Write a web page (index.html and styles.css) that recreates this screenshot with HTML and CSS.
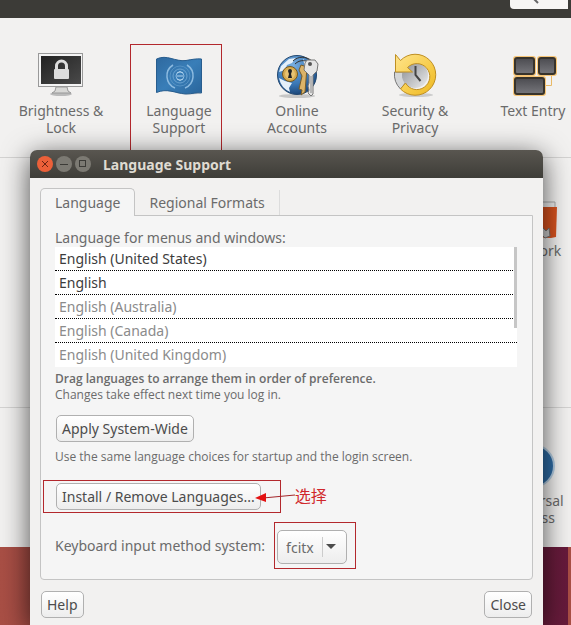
FILE: index.html
```
<!DOCTYPE html>
<html lang="en">
<head>
    <meta charset="UTF-8">
    <meta name="viewport" content="width=device-width, initial-scale=1.0">
    <title>Language Support</title>
    <link rel="stylesheet" href="styles.css">
</head>
<body>
    <div class="settings">
        <div class="topbar">
            <div class="search">
                <svg width="10" height="6" viewBox="0 0 10 6"><path d="M4 -1l4 4" fill="none" stroke="#666" stroke-width="2"/></svg>
            </div>
        </div>
        <div class="row first">
            <a class="item" href="#">
                <svg width="48" height="48" viewBox="0 0 48 48">
                    <defs>
                        <linearGradient id="screen" x1="0" y1="0" x2="1" y2="1">
                            <stop offset="0" stop-color="#222"/>
                            <stop offset="1" stop-color="#4a4a4a"/>
                        </linearGradient>
                    </defs>
                    <ellipse cx="24" cy="43" rx="11" ry="2" fill="#bbb"/>
                    <path d="M19 36h11l1 4 3 2H15l3-2z" fill="#d8d8d6" stroke="#999"/>
                    <rect x="1.500" y="2.500" width="44" height="33" fill="#f4f4f4" stroke="#999"/>
                    <rect x="4" y="5" width="40" height="28" fill="url(#screen)"/>
                    <path d="M19.500 19v-4a5 5 0 0 1 10 0v4" fill="none" stroke="#ddd" stroke-width="3"/>
                    <rect x="17" y="18" width="15" height="10" rx="1" fill="#dcdcdc"/>
                </svg>
                <span>Brightness &amp; Lock</span>
            </a>
            <a class="item marked" href="#">
                <svg width="48" height="48" viewBox="0 0 48 48">
                    <defs>
                        <linearGradient id="flag" x1="0" y1="0" x2="1" y2="1">
                            <stop offset="0" stop-color="#2f699f"/>
                            <stop offset=".5" stop-color="#397eb8"/>
                            <stop offset="1" stop-color="#2a659b"/>
                        </linearGradient>
                    </defs>
                    <ellipse cx="34" cy="42" rx="12" ry="1.500" fill="#c4c4c4"/>
                    <path d="M1.500 8C12 3 20 11 31 9.500c6-1 10-2 15.500-1.500v34c-5-1-9 1-16 1C20 42 12 37 1.500 41.500z" fill="url(#flag)" stroke="#285d8e"/>
                    <g fill="none" stroke="#8dbbe0">
                        <circle cx="25" cy="25" r="4"/>
                        <circle cx="25" cy="25" r="7" stroke="#6ba3d0"/>
                        <circle cx="25" cy="25" r="10" stroke="#5592c4"/>
                        <path d="M18 14a13 13 0 0 0 2 23M32 14a13 13 0 0 1-2 23" stroke-width="1.500"/>
                        <path d="M22 22q3-3 6 0M22 25h6M22 28q3 3 6 0" stroke="#b1d3ee"/>
                    </g>
                </svg>
                <span>Language Support</span>
            </a>
            <a class="item" href="#">
                <svg width="48" height="48" viewBox="0 0 48 48">
                    <defs>
                        <radialGradient id="globe" cx=".4" cy=".25" r=".8">
                            <stop offset="0" stop-color="#78aee0"/>
                            <stop offset=".6" stop-color="#3a77b5"/>
                            <stop offset="1" stop-color="#173f70"/>
                        </radialGradient>
                    </defs>
                    <ellipse cx="24" cy="45" rx="18" ry="2" fill="#c6c6c6"/>
                    <circle cx="24" cy="24" r="19.500" fill="url(#globe)" stroke="#24486f"/>
                    <path d="M8 15l8-7 7-1-4 5-5 2-2 5-6 2zM6 27l6 3 7 2-3 5 1 4q-9-4-11-14zM30 8l7 5 3 7-8-4z" fill="#e4f0fa"/>
                    <circle cx="17" cy="23" r="7.500" fill="#d6aa4e" stroke="#755820"/>
                    <circle cx="17" cy="23" r="5" fill="#e7c373"/>
                    <path d="M15 20a2 2 0 0 1 4 0l-1 3 1 4h-4l1-4z" fill="#222"/>
                    <path d="M20 10c5-5 13-5 19 0M22 13c5-5 12-4 16 0" fill="none" stroke="#333"/>
                    <path d="M28 14l6 2-2 25-4 3 1-5-3-1 3-13-3-6z" fill="#dbb368" stroke="#775c2a"/>
                    <path d="M34 9h8l3 4-1 7-4 4v19l-2 2-3-3 1-3-1-4 1-3v-8l-5-5 1-7z" fill="#e5e5e5" stroke="#777"/>
                    <circle cx="37" cy="13" r="2" fill="#555"/>
                    <path d="M38 25v17" stroke="#888"/>
                </svg>
                <span>Online Accounts</span>
            </a>
            <a class="item" href="#">
                <svg width="48" height="48" viewBox="0 0 48 48">
                    <defs>
                        <linearGradient id="gold" x1="0" y1="0" x2="1" y2="1">
                            <stop offset="0" stop-color="#ffe48b"/>
                            <stop offset=".6" stop-color="#f6cb48"/>
                            <stop offset="1" stop-color="#edb720"/>
                        </linearGradient>
                        <linearGradient id="face" x1="0" y1="0" x2="1" y2="1">
                            <stop offset="0" stop-color="#888b90"/>
                            <stop offset="1" stop-color="#eee"/>
                        </linearGradient>
                    </defs>
                    <ellipse cx="25" cy="44" rx="17" ry="2" fill="#ccc"/>
                    <path d="M3.500 21h9a13 13 0 0 0 2 11l-5 6q-7-7-6-17z" fill="#d4d6d8" stroke="#777"/>
                    <circle cx="24" cy="24" r="13" fill="url(#face)"/>
                    <path d="M4.500 3.500l5 6A20.500 20.500 0 1 1 9.500 38l5-6a13 13 0 1 0 2-15.500l5 4.500h-17z" fill="url(#gold)" stroke="#bf8f22"/>
                    <path d="M24.500 15v9l5 6" fill="none" stroke="#444" stroke-width="2"/>
                </svg>
                <span>Security &amp; Privacy</span>
            </a>
            <a class="item" href="#">
                <svg width="48" height="48" viewBox="0 0 48 48">
                    <defs>
                        <linearGradient id="key" x1="0" y1="0" x2="0" y2="1">
                            <stop offset="0" stop-color="#4b4b50"/>
                            <stop offset="1" stop-color="#77777c"/>
                        </linearGradient>
                    </defs>
                    <path d="M34 34.500h8.500V24" fill="none" stroke="#e9b965"/>
                    <g fill="#f6c577">
                        <rect x="4" y="5" width="23" height="20" rx="3"/>
                        <rect x="28" y="5" width="20" height="20" rx="3"/>
                        <rect x="4" y="25" width="33" height="20" rx="3"/>
                    </g>
                    <g fill="url(#key)" stroke="#37332c" stroke-width="2">
                        <rect x="6" y="7" width="19" height="16" rx="2"/>
                        <rect x="30" y="7" width="16" height="16" rx="2"/>
                        <rect x="6" y="27" width="29" height="16" rx="2"/>
                    </g>
                </svg>
                <span>Text Entry</span>
            </a>
        </div>
        <div class="row second">
            <a class="item last" href="#">
                <svg width="48" height="48" viewBox="0 0 48 48">
                    <path d="M2 11h44v8H2z" fill="#eee" stroke="#aaa"/>
                    <path d="M2 16h46l-1 30-5 1-40-2z" fill="#d9531f"/>
                    <path d="M33 36l4 4 3-3 1 8-5 2-4-4z" fill="#ccc" stroke="#777"/>
                </svg>
                <span>Network</span>
            </a>
        </div>
        <div class="row third">
            <a class="item last" href="#">
                <svg width="48" height="48" viewBox="0 0 48 48">
                    <circle cx="24" cy="25" r="21" fill="#2e6ca5" stroke="#b4cde2" stroke-width="2"/>
                </svg>
                <span>Universal Access</span>
            </a>
        </div>
    </div>

    <div class="dialog">
        <div class="titlebar">
            <button class="dot close" aria-label="Close window"><svg width="16" height="16" viewBox="0 0 16 16"><path d="M5 5l6 6M11 5l-6 6" stroke="#6b2413"/></svg></button>
            <button class="dot" aria-label="Minimize"><svg width="16" height="16" viewBox="0 0 16 16"><path d="M4 8.500h8" stroke="#3c3b37"/></svg></button>
            <button class="dot" aria-label="Maximize"><svg width="16" height="16" viewBox="0 0 16 16"><rect x="4.500" y="4.500" width="6" height="6" fill="none" stroke="#3c3b37"/></svg></button>
            <h1>Language Support</h1>
        </div>
        <div class="content">
            <div class="tabs">
                <button class="tab active">Language</button>
                <button class="tab">Regional Formats</button>
            </div>
            <div class="panel">
                <p class="label">Language for menus and windows:</p>
                <ul class="languages">
                    <li class="on">English (United States)</li>
                    <li class="on">English</li>
                    <li>English (Australia)</li>
                    <li>English (Canada)</li>
                    <li>English (United Kingdom)</li>
                </ul>
                <p class="hint strong">Drag languages to arrange them in order of preference.</p>
                <p class="hint">Changes take effect next time you log in.</p>
                <button class="btn apply">Apply System-Wide</button>
                <p class="hint">Use the same language choices for startup and the login screen.</p>
                <div class="install">
                    <div class="mark"><button class="btn">Install / Remove Languages...</button></div>
                    <svg class="arrow" width="40" height="12" viewBox="0 0 40 12"><path d="M8 7l32-3" stroke="#a3262a"/><path d="M0 7l11-5v9z" fill="#e31212"/></svg>
                    <span class="note" lang="zh">选择</span>
                </div>
                <div class="method">
                    <label for="method">Keyboard input method system:</label>
                    <div class="box">
                        <div class="select">
                            <select id="method">
                                <option>fcitx</option>
                                <option>ibus</option>
                                <option>none</option>
                            </select>
                        </div>
                    </div>
                </div>
            </div>
            <div class="actions">
                <button class="btn">Help</button>
                <button class="btn">Close</button>
            </div>
        </div>
    </div>
</body>
</html>
```
FILE: styles.css
```
* {
    box-sizing: border-box;
    margin: 0;
    padding: 0;
}
body {
    position: relative;
    min-height: 100vh;
    overflow: hidden;
    font-family: "Noto Sans", "Noto Sans CJK SC", sans-serif;
    font-size: 14px;
    line-height: 17px;
    color: #6b6b6b;
    background: linear-gradient(to right, #a94f45, #8a3540 50%, #661a3b calc(100% - 3px), #a94f45 calc(100% - 3px));
}
button, select {
    font: inherit;
    color: #4c4c4c;
}
/* settings window */
.settings {
    background: #f2f1f0;
}
.topbar {
    height: 18px;
    background: #3c3b37;
    display: flex;
    justify-content: flex-end;
}
.search {
    width: 58px;
    height: 9px;
    margin-right: 3px;
    padding-left: 20px;
    background: #f7f6f4;
    border-radius: 0 0 0 4px;
    line-height: 0;
}
.row {
    display: grid;
    grid-template-columns: repeat(5, 118px);
    padding: 33px 0 0 2px;
    overflow: hidden;
    border-bottom: 1px solid #d4d3d2;
}
.first {
    height: 140px;
}
.second {
    height: 250px;
}
.third {
    height: 139px;
    border-bottom: 0;
}
.item {
    position: relative;
    display: flex;
    flex-direction: column;
    align-items: center;
    gap: 3px;
    padding: 0 14px;
    color: #6b6b6b;
    text-align: center;
    text-decoration: none;
}
.last {
    grid-column: 5;
}
.marked::after {
    content: "";
    position: absolute;
    top: -7px;
    left: 10px;
    right: 16px;
    height: 106px;
    border: 1px solid #b3282d;
}
/* dialog */
.dialog {
    position: absolute;
    top: 150px;
    left: 30px;
    right: 28px;
    bottom: 0;
    background: #f2f1f0;
    border-radius: 7px 7px 0 0;
    box-shadow: 0 6px 28px rgba(0, 0, 0, 0.7);
}
.titlebar {
    display: flex;
    align-items: center;
    gap: 3px;
    height: 28px;
    padding-left: 7px;
    border-radius: 7px 7px 0 0;
    background: linear-gradient(#595650, #3e3d38);
}
.titlebar h1 {
    margin-left: 9px;
    font-size: 14px;
    color: #dfdbd2;
}
.dot {
    width: 16px;
    height: 16px;
    border: 0;
    border-radius: 50%;
    background: #7c7a73;
    line-height: 0;
}
.close {
    background: #ec6039;
}
.content {
    padding: 10px 10px 0;
}
.tabs {
    display: flex;
    align-items: flex-end;
}
.tab {
    height: 25px;
    padding: 0 14px;
    border: 0;
    border-right: 1px solid #dcdcdc;
    background: none;
    color: #6b6b6b;
}
.active {
    position: relative;
    height: 28px;
    margin-bottom: -1px;
    border: 1px solid #c4c4c4;
    border-bottom: 0;
    border-radius: 5px 5px 0 0;
    background: #f5f5f5;
}
.panel {
    padding: 13px 15px 10px 14px;
    border: 1px solid #c4c4c4;
    border-radius: 0 0 4px 4px;
    background: #f5f5f5;
}
.label {
    margin-bottom: 1px;
}
.languages {
    position: relative;
    margin-bottom: 4px;
    background: #fff;
    list-style: none;
}
.languages::after {
    content: "";
    position: absolute;
    top: 0;
    right: 0;
    width: 3px;
    height: 81px;
    background: #c6c6c6;
}
.languages li {
    height: 24px;
    padding-left: 4px;
    line-height: 23px;
    color: #8b8b8b;
    border-bottom: 1px dotted #000;
}
.languages li:last-child {
    border-bottom: 0;
}
.languages .on {
    color: #3c3c3c;
}
.hint {
    font-family: "Open Sans", sans-serif;
    font-size: 12px;
    line-height: 16px;
}
.strong {
    font-weight: 600;
}
.btn {
    height: 27px;
    padding: 0 5px;
    border: 1px solid #b0b0b0;
    border-radius: 5px;
    background: linear-gradient(#fff, #ededed);
}
.apply {
    display: block;
    margin: 12px 0 7px 1px;
}
.install {
    display: flex;
    align-items: center;
    margin: 18px 0 12px 1px;
}
.mark {
    position: relative;
}
.mark::before {
    content: "";
    position: absolute;
    inset: -3px -20px -3px -13px;
    border: 1px solid #b3282d;
    pointer-events: none;
}
.arrow {
    position: relative;
    margin-left: -6px;
}
.note {
    font-size: 16px;
    color: #d0272b;
}
.method {
    display: flex;
    align-items: center;
    gap: 9px;
}
.box {
    padding: 7px 8px 4px 2px;
    border: 1px solid #b3282d;
}
.select {
    position: relative;
}
.select::after {
    content: "";
    position: absolute;
    top: 14px;
    right: 11px;
    border: 5px solid transparent;
    border-top-color: #4c4c4c;
    border-bottom: 0;
    pointer-events: none;
}
.select select {
    display: block;
    width: 70px;
    height: 34px;
    padding-left: 8px;
    appearance: none;
    border: 1px solid #b0b0b0;
    border-radius: 5px;
    background: linear-gradient(#ccc, #ccc) 44px 6px / 1px 20px no-repeat, linear-gradient(#fff, #ededed);
    color: #6b6b6b;
}
.actions {
    display: flex;
    justify-content: space-between;
    padding: 11px 1px;
}
```
